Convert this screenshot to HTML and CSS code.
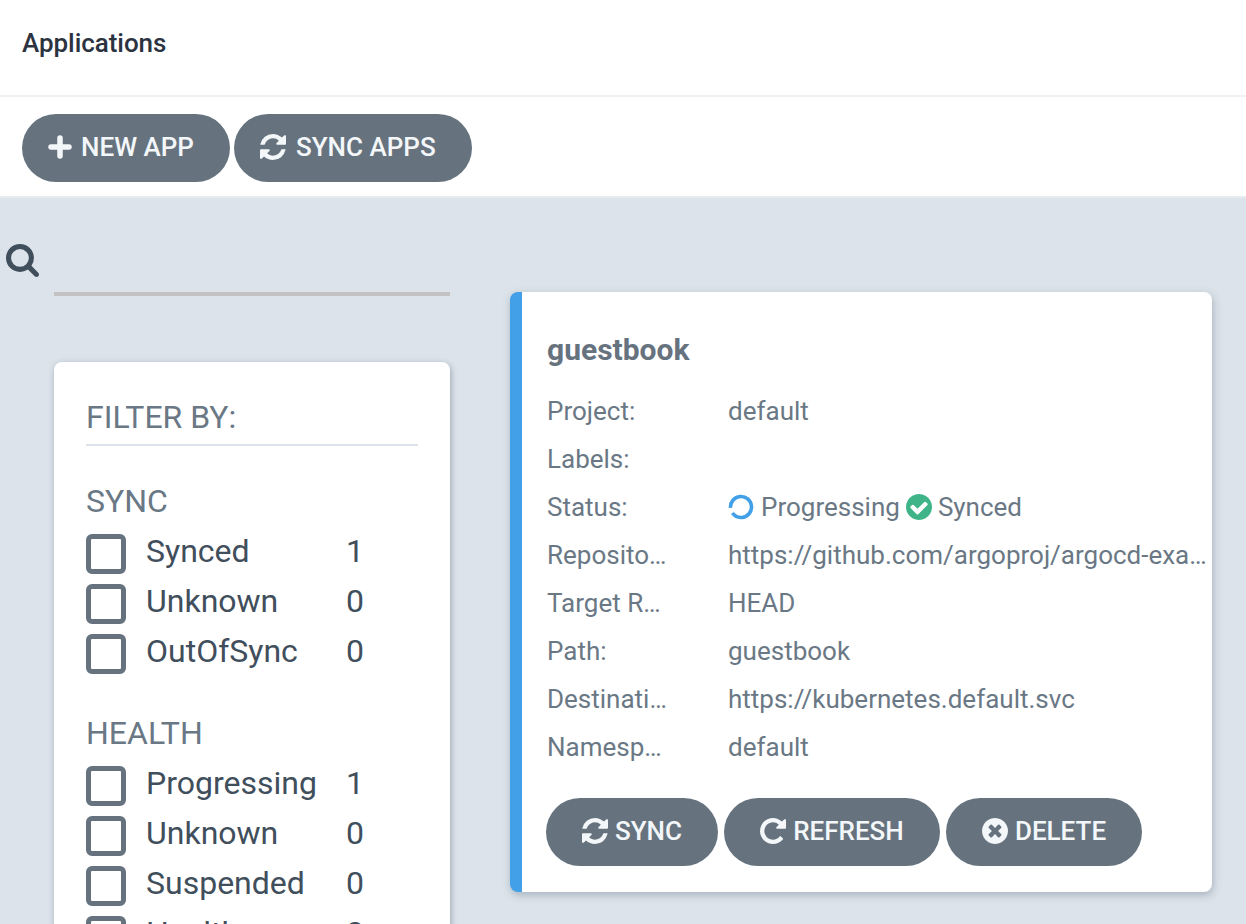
FILE: index.html
```html
<!DOCTYPE html>
<html lang="en">
  <head>
    <meta charset="UTF-8" />
    <title>Applications</title>
    <link rel="stylesheet" href="styles.css">
  </head>
  <body>
    <svg class="icon-defs" xmlns="http://www.w3.org/2000/svg">
      <symbol id="i-plus" viewBox="0 0 24 24"><path class="plus-arms" d="M12 3v18M3 12h18"/></symbol>
      <symbol id="i-sync" viewBox="128 128 1536 1536"><path d="M1639 1056q0 5-1 7-64 268-268 434.5t-478 166.5q-146 0-282.5-55t-243.5-157l-129 129q-19 19-45 19t-45-19-19-45v-448q0-26 19-45t45-19h448q26 0 45 19t19 45-19 45l-137 137q71 66 161 102t187 36q134 0 250-65t186-179q11-17 53-117 8-23 30-23h192q13 0 22.5 9.5t9.5 22.5zm25-800v448q0 26-19 45t-45 19h-448q-26 0-45-19t-19-45 19-45l138-138q-148-137-349-137-134 0-250 65t-186 179q-11 17-53 117-8 23-30 23h-199q-13 0-22.5-9.5t-9.5-22.5v-7q65-268 270-434.5t480-166.5q146 0 284 55.5t245 156.5l130-129q19-19 45-19t45 19 19 45z"/></symbol>
      <symbol id="i-repeat" viewBox="128 128 1536 1536"><path d="M1664 256v448q0 26-19 45t-45 19h-448q-42 0-59-40-17-39 14-69l138-138q-148-137-349-137-104 0-198.5 40.5t-163.5 109.5-109.5 163.5-40.5 198.5 40.5 198.5 109.5 163.5 163.5 109.5 198.5 40.5q119 0 225-52t179-147q7-10 23-12 15 0 25 9l137 138q9 8 9.5 20.5t-7.5 22.5q-109 132-264 204.5t-327 72.5q-156 0-298-61t-245-164-164-245-61-298 61-298 164-245 245-164 298-61q147 0 284.5 55.5t244.5 156.5l130-129q29-31 70-14 39 17 39 59z"/></symbol>
      <symbol id="i-times" viewBox="128 128 1536 1536"><path d="M1277 1122q0-26-19-45l-181-181 181-181q19-19 19-45 0-27-19-46l-90-90q-19-19-46-19-26 0-45 19l-181 181-181-181q-19-19-45-19-27 0-46 19l-90 90q-19 19-19 46 0 26 19 45l181 181-181 181q-19 19-19 45 0 27 19 46l90 90q19 19 46 19 26 0 45-19l181-181 181 181q19 19 45 19 27 0 46-19l90-90q19-19 19-46zm387-226q0 209-103 385.5t-279.5 279.5-385.5 103-385.5-103-279.5-279.5-103-385.5 103-385.5 279.5-279.5 385.5-103 385.5 103 279.5 279.5 103 385.5z"/></symbol>
      <symbol id="i-check" viewBox="128 128 1536 1536"><path d="M1412 734q0-28-18-46l-91-90q-19-19-45-19t-45 19l-408 407-226-226q-19-19-45-19t-45 19l-91 90q-18 18-18 46 0 27 18 45l362 362q19 19 45 19 27 0 46-19l543-543q18-18 18-45zm252 162q0 209-103 385.5t-279.5 279.5-385.5 103-385.5-103-279.5-279.5-103-385.5 103-385.5 279.5-279.5 385.5-103 385.5 103 279.5 279.5 103 385.5z"/></symbol>
      <symbol id="i-search" viewBox="64 128 1664 1664"><path d="M1216 832q0-185-131.5-316.5t-316.5-131.5-316.5 131.5-131.5 316.5 131.5 316.5 316.5 131.5 316.5-131.5 131.5-316.5zm512 832q0 52-38 90t-90 38q-54 0-90-38l-343-342q-179 124-399 124-143 0-273.5-55.5t-225-150-150-225-55.5-273.5 55.5-273.5 150-225 225-150 273.5-55.5 273.5 55.5 225 150 150 225 55.5 273.5q0 220-124 399l343 343q37 37 37 90z"/></symbol>
    </svg>

    <header class="top-bar"><h1>Applications</h1></header>

    <div class="tool-bar">
      <button class="btn btn-new"><svg class="btn-icon"><use href="#i-plus"/></svg>NEW APP</button>
      <button class="btn btn-sync-apps"><svg class="btn-icon"><use href="#i-sync"/></svg>SYNC APPS</button>
    </div>

    <main class="content">
      <aside class="side">
        <div class="search">
          <svg class="search-icon"><use href="#i-search"/></svg>
          <div class="search-input"></div>
        </div>

        <section class="filters">
          <h2 class="filters-title">FILTER BY:</h2>

          <h3 class="group-title">SYNC</h3>
          <div class="filter"><span class="box"></span><span class="filter-name">Synced</span><span class="filter-count">1</span></div>
          <div class="filter"><span class="box"></span><span class="filter-name">Unknown</span><span class="filter-count">0</span></div>
          <div class="filter"><span class="box"></span><span class="filter-name">OutOfSync</span><span class="filter-count">0</span></div>

          <h3 class="group-title group-health">HEALTH</h3>
          <div class="filter"><span class="box"></span><span class="filter-name">Progressing</span><span class="filter-count">1</span></div>
          <div class="filter"><span class="box"></span><span class="filter-name">Unknown</span><span class="filter-count">0</span></div>
          <div class="filter"><span class="box"></span><span class="filter-name">Suspended</span><span class="filter-count">0</span></div>
          <div class="filter"><span class="box"></span><span class="filter-name">Healthy</span><span class="filter-count">0</span></div>
        </section>
      </aside>

      <article class="card">
        <h2 class="card-title">guestbook</h2>
        <div class="row"><div class="row-label">Project:</div><div class="row-value">default</div></div>
        <div class="row"><div class="row-label">Labels:</div><div class="row-value"></div></div>
        <div class="row">
          <div class="row-label">Status:</div>
          <div class="row-value status">
            <svg class="status-icon status-spin" viewBox="0 0 26 26"><circle class="spinner" cx="13" cy="13" r="10.5"/></svg>
            <span>Progressing</span>
            <svg class="status-icon status-ok"><use href="#i-check"/></svg>
            <span>Synced</span>
          </div>
        </div>
        <div class="row"><div class="row-label">Repository:</div><div class="row-value">https://github.com/argoproj/argocd-example-apps</div></div>
        <div class="row"><div class="row-label">Target Revision:</div><div class="row-value">HEAD</div></div>
        <div class="row"><div class="row-label">Path:</div><div class="row-value">guestbook</div></div>
        <div class="row"><div class="row-label">Destination:</div><div class="row-value">https://kubernetes.default.svc</div></div>
        <div class="row"><div class="row-label">Namespace:</div><div class="row-value">default</div></div>
        <div class="card-actions">
          <button class="btn btn-small btn-sync"><svg class="btn-icon"><use href="#i-sync"/></svg>SYNC</button>
          <button class="btn btn-small btn-refresh"><svg class="btn-icon"><use href="#i-repeat"/></svg>REFRESH</button>
          <button class="btn btn-small btn-delete"><svg class="btn-icon"><use href="#i-times"/></svg>DELETE</button>
        </div>
      </article>
    </main>
  </body>
</html>
```

FILE: styles.css
```css
html,
body {
  margin: 0;
  padding: 0;
  height: 924px;
  overflow: hidden;
}

body {
  font-family: Roboto, "Liberation Sans", sans-serif;
  background-color: #dce3ea;
  color: #6a7885;
}

.icon-defs {
  display: none;
}

.top-bar {
  height: 85px;
  background: #fff;
  border-bottom: 2px solid #eff3f6;
  display: flex;
  align-items: center;
  padding-left: 22px;
  padding-bottom: 10px;
}

.top-bar h1 {
  margin: 0;
  font-size: 26px;
  font-weight: 500;
  letter-spacing: -0.05px;
  color: #2c3340;
}

.tool-bar {
  height: 101px;
  background: #fff;
  border-bottom: 2px solid #e6ebef;
  display: flex;
  align-items: center;
  gap: 4px;
  padding-left: 22px;
  padding-top: 2px;
  box-sizing: border-box;
}

.btn {
  height: 68px;
  border: none;
  border-radius: 34px;
  background: #66737f;
  color: #f4f7f9;
  font-family: inherit;
  font-size: 26px;
  font-weight: 500;
  display: flex;
  align-items: center;
  padding: 0 0 2px;
  box-sizing: border-box;
}

.btn-icon {
  fill: currentColor;
  width: 26px;
  height: 26px;
  flex: none;
}

.plus-arms {
  fill: none;
  stroke: currentColor;
  stroke-width: 5.5;
  stroke-linecap: round;
}

.btn-new {
  width: 208px;
  padding-left: 26px;
}

.btn-new .btn-icon {
  margin-right: 9px;
  width: 24px;
  height: 24px;
}

.btn-sync-apps {
  width: 238px;
  padding-left: 26px;
}

.btn-sync-apps .btn-icon {
  margin-right: 10px;
}

.content {
  display: flex;
  align-items: flex-start;
  padding-left: 6px;
}

.side {
  width: 444px;
  flex: none;
}

.search {
  height: 164px;
  display: flex;
  align-items: flex-start;
}

.search-icon {
  width: 33px;
  height: 33px;
  fill: #414e5c;
  margin-top: 46px;
  margin-right: 15px;
  flex: none;
}

.search-input {
  width: 396px;
  height: 4px;
  margin-top: 94px;
  background: #c2c2c2;
}

.filters {
  margin-left: 48px;
  width: 396px;
  height: 700px;
  box-sizing: border-box;
  background: #fff;
  border-radius: 8px;
  padding: 32px 32px 0;
  box-shadow: 1px 2px 6px rgba(70, 90, 110, 0.45);
}

.filters-title {
  margin: 0;
  font-size: 32px;
  font-weight: 400;
  line-height: 46px;
  height: 50px;
  border-bottom: 2px solid #dce3ea;
}

.group-title {
  margin: 38px 0 8px;
  font-size: 32px;
  font-weight: 400;
  line-height: 34px;
}

.group-health {
  margin-top: 40px;
}

.filter {
  height: 50px;
  display: flex;
  align-items: center;
  font-size: 32px;
  color: #414e5c;
}

.box {
  width: 40px;
  height: 40px;
  margin-top: 6px;
  box-sizing: border-box;
  border: 5px solid #66737f;
  border-radius: 6px;
  flex: none;
}

.filter-name {
  margin-left: 20px;
  width: 200px;
}

.card {
  margin-left: 60px;
  margin-top: 94px;
  width: 702px;
  height: 600px;
  box-sizing: border-box;
  background: #fff;
  border-left: 12px solid #41a0e8;
  border-radius: 8px;
  padding: 36px 5px 0 25px;
  box-shadow: 1px 3px 8px rgba(70, 90, 110, 0.35);
}

.card-title {
  margin: 0 0 15px;
  font-size: 30px;
  font-weight: 700;
  line-height: 44px;
  color: #66737f;
}

.row {
  display: flex;
  height: 48px;
  align-items: center;
  font-size: 26px;
}

.row-label {
  width: 120px;
  margin-right: 61px;
  flex: none;
  white-space: nowrap;
  overflow: hidden;
  text-overflow: ellipsis;
}

.row-value {
  flex: 1;
  min-width: 0;
  white-space: nowrap;
  overflow: hidden;
  text-overflow: ellipsis;
}

.status {
  display: flex;
  align-items: center;
  gap: 6px;
}

.status-icon {
  width: 26px;
  height: 26px;
  flex: none;
}

.status-spin {
  margin-right: 1px;
}

.status-ok {
  fill: #3fb488;
}

.spinner {
  fill: none;
  stroke: #41a0e8;
  stroke-width: 3.6;
  stroke-dasharray: 60 6;
  transform: rotate(175deg);
  transform-origin: center;
}

.card-actions {
  display: flex;
  gap: 6px;
  margin-top: 27px;
  margin-left: -1px;
}

.btn-small {
  font-size: 26px;
  justify-content: center;
}

.btn-small .btn-icon {
  margin-right: 7px;
}

.btn-sync {
  width: 172px;
}

.btn-refresh {
  width: 216px;
}

.btn-delete {
  width: 196px;
}
```
